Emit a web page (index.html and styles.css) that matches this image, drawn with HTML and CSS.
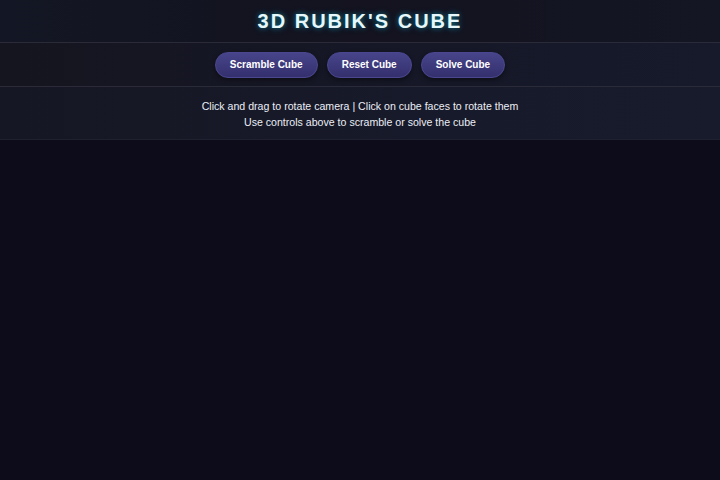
FILE: index.html
```html
<!DOCTYPE html>
<html>
<head>
<meta charset="utf-8">
<link rel="stylesheet" href="styles.css">
</head>
<body>
<header class="header">
  <h1 class="title">3D RUBIK'S CUBE</h1>
</header>
<div class="controls">
  <button class="btn">Scramble Cube</button>
  <button class="btn">Reset Cube</button>
  <button class="btn">Solve Cube</button>
</div>
<div class="info">
  <p>Click and drag to rotate camera | Click on cube faces to rotate them</p>
  <p>Use controls above to scramble or solve the cube</p>
</div>
<main class="stage"></main>
</body>
</html>
```
FILE: styles.css
```css
html, body {
  margin: 0;
  padding: 0;
  height: 100%;
}
body {
  background: #0c0c1b;
  font-family: "Liberation Sans", Arial, sans-serif;
  color: #fff;
  display: flex;
  flex-direction: column;
}
.header {
  height: 42px;
  display: flex;
  align-items: center;
  justify-content: center;
  background: linear-gradient(90deg, #131624, #14131f 50%, #141624);
  border-bottom: 1px solid #2a2a38;
}
.title {
  margin: 0;
  font-size: 20px;
  font-weight: bold;
  letter-spacing: 2px;
  color: #e6f8fb;
  text-shadow: 0 0 5px rgba(0, 210, 240, 0.45), 0 0 10px rgba(0, 190, 240, 0.2);
}
.controls {
  height: 43px;
  display: flex;
  align-items: center;
  justify-content: center;
  gap: 9px;
  background: linear-gradient(90deg, #15151f, #161828 60%, #161a2a);
  border-bottom: 1px solid #2a2a38;
}
.btn {
  height: 26px;
  padding: 0 14px;
  border: 1px solid #4a4790;
  border-radius: 13px;
  background: linear-gradient(180deg, #47448a, #34306e);
  color: #fff;
  font-family: "Liberation Sans", Arial, sans-serif;
  font-size: 10px;
  font-weight: bold;
  box-shadow: 0 2px 5px rgba(0, 0, 0, 0.45);
}
.info {
  height: 53px;
  box-sizing: border-box;
  padding-top: 11px;
  text-align: center;
  background: linear-gradient(90deg, #161724, #171a2a 60%, #181b2c);
  border-bottom: 1px solid #1f2030;
}
.info p {
  margin: 0;
  font-size: 10.6px;
  line-height: 16px;
  color: #eceef5;
}
.stage {
  flex: 1;
}
```
